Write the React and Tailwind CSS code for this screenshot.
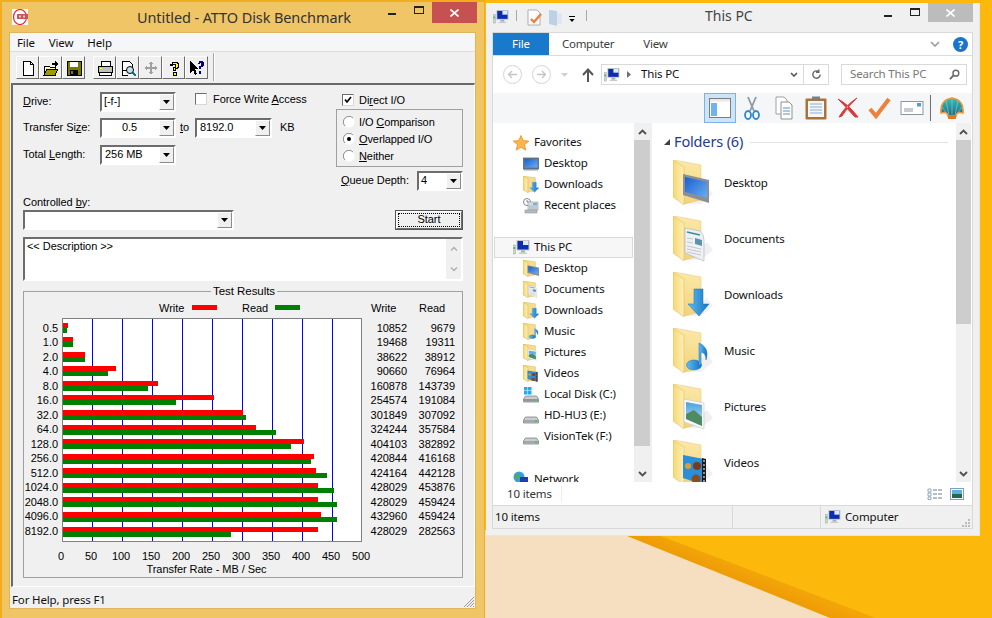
const sans = "font-['Liberation_Sans',Arial,sans-serif]";
const noto = "font-['Noto_Sans',sans-serif]";
const ui = "text-[11.5px] tracking-[-0.15px]";

const results = [
  ["0.5", 10852, 9679, 322, 68, 67],
  ["1.0", 19468, 19311, 336, 73, 73],
  ["2.0", 38622, 38912, 351, 85, 85],
  ["4.0", 90660, 76964, 365, 116, 108],
  ["8.0", 160878, 143739, 380, 158, 148],
  ["16.0", 254574, 191084, 394, 214, 176],
  ["32.0", 301849, 307092, 409, 243, 246],
  ["64.0", 324244, 357584, 424, 256, 276],
  ["128.0", 404103, 382892, 438, 304, 291],
  ["256.0", 420844, 416168, 453, 314, 311],
  ["512.0", 424164, 442128, 467, 316, 327],
  ["1024.0", 428029, 453876, 482, 318, 334],
  ["2048.0", 428029, 459424, 496, 318, 337],
  ["4096.0", 432960, 459424, 511, 321, 337],
  ["8192.0", 428029, 282563, 526, 318, 231],
];

const ticks = [0, 50, 100, 150, 200, 250, 300, 350, 400, 450, 500];

function Gradients() {
  return (
    <svg className="absolute w-0 h-0">
      <defs>
        <linearGradient id="flap" x1="0" y1="0" x2="1" y2="0">
          <stop offset="0" stopColor="#f7d774" />
          <stop offset="1" stopColor="#fdefb6" />
        </linearGradient>
        <linearGradient id="back" x1="0" y1="0" x2="0" y2="1">
          <stop offset="0" stopColor="#fbe9a8" />
          <stop offset="1" stopColor="#f3d27a" />
        </linearGradient>
        <linearGradient id="blue" x1="0" y1="0" x2="1" y2="1">
          <stop offset="0" stopColor="#1a5fd0" />
          <stop offset="1" stopColor="#6aaef2" />
        </linearGradient>
        <linearGradient id="arrow" x1="0" y1="0" x2="1" y2="0">
          <stop offset="0" stopColor="#62bdf0" />
          <stop offset="1" stopColor="#1273c4" />
        </linearGradient>
        <linearGradient id="sky" x1="0" y1="0" x2="0" y2="1">
          <stop offset="0" stopColor="#4aa0e0" />
          <stop offset="1" stopColor="#c6e6f4" />
        </linearGradient>
        <linearGradient id="shell" x1="0" y1="0" x2="0" y2="1">
          <stop offset="0" stopColor="#29c4c4" />
          <stop offset="1" stopColor="#0e6a96" />
        </linearGradient>
        <linearGradient id="band" gradientUnits="userSpaceOnUse" x1="735" y1="582" x2="752" y2="540">
          <stop offset="0" stopColor="#ee9a06" />
          <stop offset="1" stopColor="#fcb90c" />
        </linearGradient>
      </defs>
    </svg>
  );
}

function Overlay({ kind }) {
  if (kind === "Desktop")
    return (
      <g>
        <polygon points="10,14 36,20 36,43 10,35" fill="#8c8f94" />
        <polygon points="12,17 34,22 34,38 12,32" fill="url(#blue)" />
      </g>
    );
  if (kind === "Documents")
    return (
      <g>
        <path d="M12 12 L27 15 Q31 18 31 24 L31 45 L12 37 Z" fill="#eef0f4" stroke="#b4b8c0" strokeWidth="0.7" />
        <path d="M14 16 L27 19" stroke="#3a8f94" strokeWidth="1.5" />
        <polygon points="22,22 29,24 29,30 22,28" fill="#5c93a8" />
        <path d="M14 22 L20 23 M14 26 L20 27 M14 30 L28 33 M14 33 L28 36 M14 36 L28 39" stroke="#b8bcc4" strokeWidth="0.8" />
      </g>
    );
  if (kind === "Downloads")
    return <polygon points="21,17 30,17 30,32 36,32 26,44 15,32 21,32" fill="url(#arrow)" stroke="#1273c4" strokeWidth="0.5" />;
  if (kind === "Music")
    return (
      <g>
        <ellipse cx="21" cy="37" rx="7.5" ry="5" fill="url(#arrow)" stroke="#1273c4" strokeWidth="0.5" />
        <path d="M26 37 L26 15 Q37 20 33 32 Q33 25 28 24 L28 37 Z" fill="url(#arrow)" stroke="#1273c4" strokeWidth="0.5" />
      </g>
    );
  if (kind === "Pictures")
    return (
      <g>
        <polygon points="11,15 31,19 31,45 11,38" fill="#f6f8fa" stroke="#c4c8cc" strokeWidth="0.6" />
        <polygon points="13,18 29,21 29,42 13,35" fill="url(#sky)" />
        <polygon points="13,30 21,26 29,33 29,42 13,35" fill="#4f8a62" />
      </g>
    );
  if (kind === "Videos")
    return (
      <g>
        <polygon points="10,15 31,19 31,45 10,38" fill="#2b8fd8" />
        <polygon points="29,18 33,19 33,45 29,44" fill="#1c1c1c" />
        <path d="M30 21h2 M30 25h2 M30 29h2 M30 33h2 M30 37h2 M30 41h2" stroke="#fff" strokeWidth="1.2" />
        <circle cx="24" cy="26" r="4" fill="#7b3a1c" />
        <circle cx="23" cy="39" r="4.5" fill="#8f4a20" />
        <circle cx="15" cy="26" r="3" fill="#e0a030" />
      </g>
    );
  return null;
}

function Folder({ kind, small }) {
  if (small)
    return (
      <svg viewBox="0 0 36 46" preserveAspectRatio="none" className="w-[16px] h-[17px]">
        <polygon points="1,0 28,5 28,40 11,44" fill="#f6dc8c" stroke="#d9b55a" strokeWidth="1" />
        <polygon points="0,0 11,7 11,45 0,37" fill="url(#flap)" stroke="#c9a548" strokeWidth="1" />
        <Overlay kind={kind} />
      </svg>
    );
  return (
    <svg viewBox="0 0 40 46" className="w-[40px] h-[46px]">
      <polygon points="10,44 28,44 40,34 34,26" fill="#000" opacity="0.06" />
      <polygon points="1,0 28,5 28,40 11,44" fill="url(#back)" stroke="#e5c671" strokeWidth="0.5" />
      <polygon points="0,0 11,7 11,45 0,37" fill="url(#flap)" stroke="#d9b55a" strokeWidth="0.5" />
      <Overlay kind={kind} />
    </svg>
  );
}

function Pc({ className = "w-[17px] h-[15px]" }) {
  return (
    <svg viewBox="0 0 17 15" className={className}>
      <rect x="0" y="5" width="2.5" height="9" fill="#cfd5d6" stroke="#8a9490" strokeWidth="0.4" />
      <rect x="0.5" y="7" width="1.5" height="2" fill="#42b84a" />
      <rect x="3.5" y="0" width="13" height="10.5" fill="#c4c9cf" />
      <rect x="4.5" y="1" width="11" height="8.5" fill="#0b2db0" />
      <rect x="10" y="1" width="5.5" height="4" fill="#dfe9ff" />
      <rect x="8" y="10.5" width="4" height="2" fill="#a5abb0" />
      <rect x="6" y="12.5" width="8" height="1.5" fill="#c8ccd0" />
    </svg>
  );
}

function Drive({ win }) {
  return (
    <svg viewBox="0 0 16 16" className="w-[16px] h-[16px]">
      {win && (
        <g fill="#1ab0ef">
          <rect x="1" y="0" width="3.5" height="3.5" />
          <rect x="5" y="0" width="3.5" height="3.5" />
          <rect x="1" y="4" width="3.5" height="3.5" />
          <rect x="5" y="4" width="3.5" height="3.5" />
        </g>
      )}
      <path d="M2.5 9 L13.5 9 L15.5 12 L15.5 15 L0.5 15 L0.5 12 Z" fill="#c9cdd0" stroke="#6f767c" strokeWidth="0.7" />
      <rect x="1" y="12" width="14" height="2.5" fill={win ? "#8c979e" : "#a4a8ac"} />
      <rect x="12" y="12" width="2" height="2" fill="#5cc04c" />
    </svg>
  );
}

function NavIcon({ name }) {
  if (name === "Desktop*")
    return (
      <svg viewBox="0 0 16 16" className="w-[16px] h-[16px]">
        <rect x="0.5" y="2" width="15" height="11" fill="#6c7c8f" stroke="#43566f" strokeWidth="0.7" />
        <rect x="1.5" y="3" width="13" height="8.5" fill="url(#blue)" />
        <rect x="1" y="13" width="14" height="1.5" fill="#9aa3ad" />
      </svg>
    );
  if (name === "Recent places")
    return (
      <svg viewBox="0 0 16 16" className="w-[16px] h-[16px]">
        <circle cx="4" cy="4" r="3.5" fill="#fff" stroke="#7e8a92" />
        <path d="M4 2v2h2" stroke="#555" fill="none" strokeWidth="0.7" />
        <rect x="5" y="4" width="10" height="8" fill="#d8dee2" stroke="#8c979e" strokeWidth="0.6" />
        <rect x="10" y="5" width="4" height="2" fill="#6ab0e0" />
        <path d="M6 8h8 M6 10h8" stroke="#9aa4ac" strokeWidth="0.7" />
        <rect x="2" y="12" width="12" height="3" fill="#b6bcc2" stroke="#7e8a92" strokeWidth="0.5" />
      </svg>
    );
  if (name === "Local Disk (C:)") return <Drive win />;
  if (name === "HD-HU3 (E:)" || name === "VisionTek (F:)") return <Drive />;
  return <Folder kind={name} small />;
}

function NavRow({ name, icon }) {
  return (
    <div className="h-[21px] flex items-center pl-[30px] gap-[5px]">
      <NavIcon name={icon || name} />
      <span className="mt-[-1px] text-[#111]">{name}</span>
    </div>
  );
}

function TriDown({ className = "w-[7px] h-[4px]" }) {
  return (
    <svg viewBox="0 0 7 4" className={className}>
      <polygon points="0,0 7,0 3.5,4" fill="#000" />
    </svg>
  );
}

function Combo({ width, text, center, pad = "pl-[2px]" }) {
  return (
    <div className={"flex h-[20px] bg-white border-2 border-t-[#6d6d6d] border-l-[#6d6d6d] border-r-white border-b-white " + width}>
      <div className={"flex-1 flex items-center text-[11px] text-black " + pad + (center ? " justify-center" : "")}>{text}</div>
      <div className="w-[15px] flex items-center justify-center bg-[#f0f0f0] border border-t-white border-l-white border-r-[#8a8a8a] border-b-[#8a8a8a]">
        <TriDown />
      </div>
    </div>
  );
}

function Check({ checked }) {
  return (
    <div className="w-[12px] h-[12px] bg-white border border-t-[#6d6d6d] border-l-[#6d6d6d] border-r-[#d8d8d8] border-b-[#d8d8d8] flex items-center justify-center">
      {checked && (
        <svg viewBox="0 0 8 8" className="w-[8px] h-[8px]">
          <path d="M1 3.5 L3 6 L7 1" stroke="#000" strokeWidth="1.7" fill="none" />
        </svg>
      )}
    </div>
  );
}

function Radio({ on }) {
  return (
    <svg viewBox="0 0 12 12" className="w-[12px] h-[12px]">
      <circle cx="6" cy="6" r="5.5" fill="#fff" />
      <path d="M2 10 A5.5 5.5 0 0 1 10 2" stroke="#8e8e8e" fill="none" />
      {on && <circle cx="6" cy="6" r="2" fill="#000" />}
    </svg>
  );
}

function RadioRow({ on, children }) {
  return (
    <div className="h-[17px] flex items-center pl-[6px] gap-[4px] text-[11px] tracking-[-0.1px] text-black">
      <Radio on={on} />
      <span>{children}</span>
    </div>
  );
}

function ToolBtn({ children, className = "" }) {
  return (
    <div className={"w-[23px] h-[23px] flex items-center justify-center bg-[#f0f0f0] border border-t-white border-l-white border-r-[#6d6d6d] border-b-[#6d6d6d] " + className}>
      <svg viewBox="0 0 16 16" className="w-[16px] h-[16px]" shapeRendering="crispEdges">
        {children}
      </svg>
    </div>
  );
}

function AttoWindow() {
  return (
    <div className={"relative w-[485px] h-[618px] border-l-2 border-t-2 border-r border-[#f2ac1c] bg-[#efc566] " + sans}>
      <div className="h-[30px] flex items-start">
        <svg viewBox="0 0 16 16" className="w-[16px] h-[16px] ml-[10px] mt-[7px]">
          <rect width="16" height="16" fill="#fff" />
          <ellipse cx="8" cy="8" rx="6.5" ry="7.5" fill="none" stroke="#ee2030" strokeWidth="1.2" />
          <rect x="5" y="5" width="11" height="5" fill="#c8555a" />
          <rect x="7" y="6.5" width="2" height="2" fill="#d8c8c8" />
          <rect x="11" y="6.5" width="2" height="2" fill="#d8c8c8" />
        </svg>
        <div className={"ml-[109px] mt-[5px] text-[14.5px] leading-[20px] tracking-[-0.1px] text-[#333] " + noto}>Untitled - ATTO Disk Benchmark</div>
        <div className="ml-auto mr-[7px] flex">
          <div className="w-[27px] h-[20px] flex items-center justify-center">
            <div className="w-[8px] h-[2px] bg-[#222] mt-[3px]" />
          </div>
          <div className="w-[27px] h-[20px] flex items-center justify-center">
            <div className="w-[10px] h-[8px] border border-t-2 border-[#222] mt-[-4px]" />
          </div>
          <div className="w-[45px] h-[21px] bg-[#c75050] flex items-center justify-center">
            <svg viewBox="0 0 9 8" className="w-[9px] h-[8px]">
              <path d="M0.5 0.5 L8.5 7.5 M8.5 0.5 L0.5 7.5" stroke="#fff" strokeWidth="1.6" />
            </svg>
          </div>
        </div>
      </div>

      <div className="ml-[7px] w-[467px] h-[577px] border border-[#dcb55d] bg-[#f0f0f0] flex flex-col">
        <div className={"h-[19px] pt-[1px] bg-[#f5f6f7] border-b border-[#dedede] flex items-center text-[#111] " + ui + " " + noto}>
          <span className="ml-[7px]">File</span>
          <span className="ml-[14px]">View</span>
          <span className="ml-[14px]">Help</span>
        </div>

        <div className="h-[31px] flex pl-[6px] pt-[4px]">
          <ToolBtn>
            <path d="M3 1h7l3 3v11H3z" fill="#fff" stroke="#000" />
            <path d="M10 1v3h3" fill="none" stroke="#000" />
          </ToolBtn>
          <ToolBtn>
            <path d="M1 6h5l1 1h5v8H1z" fill="#ffff9c" stroke="#000" />
            <path d="M1 15l3-6h11l-3 6z" fill="#9c9c00" stroke="#000" />
            <path d="M9 3h3v-2l3 3-3 3v-2H9z" fill="#000" />
          </ToolBtn>
          <ToolBtn>
            <rect x="1" y="1" width="14" height="14" fill="#7a7a00" stroke="#000" />
            <rect x="4" y="2" width="8" height="5" fill="#fff" />
            <rect x="4" y="10" width="8" height="5" fill="#000" />
            <rect x="5" y="11" width="2" height="3" fill="#7a7a00" />
          </ToolBtn>
          <ToolBtn className="ml-[8px]">
            <rect x="4" y="1" width="9" height="5" fill="#fff" stroke="#000" />
            <rect x="1" y="6" width="14" height="6" fill="#c0c0c0" stroke="#000" />
            <rect x="3" y="8" width="2" height="1" fill="#ffff00" />
            <rect x="2" y="12" width="12" height="3" fill="#fff" stroke="#000" />
          </ToolBtn>
          <ToolBtn>
            <path d="M2 1h7l3 3v6H2z M2 10v5h6" fill="#fff" stroke="#000" />
            <circle cx="10" cy="10" r="3.5" fill="#bfe4f0" stroke="#000" shapeRendering="auto" />
            <path d="M13 13l3 3" stroke="#008080" strokeWidth="2" />
          </ToolBtn>
          <ToolBtn>
            <path d="M8 1l2 3H9v3h3V6l3 2-3 2V9H9v3h1l-2 3-2-3h1V9H4v1L1 8l3-2v1h3V4H6z" fill="#a0a0a0" />
          </ToolBtn>
          <ToolBtn>
            <path d="M4 4h2V2h5v1h1v4h-1v1H9v2H7V7h2V4H6v1H4z" fill="#ffff00" stroke="#000" />
            <rect x="7" y="12" width="3" height="3" fill="#ffff00" stroke="#000" />
          </ToolBtn>
          <ToolBtn>
            <path d="M1 1v12l3-3 2 5 2-1-2-5h4z" fill="#000" />
            <path d="M9 3h1V1h4v1h1v4h-1v1h-2v2h-2V6h2V3h-1v1H9z" fill="#000080" />
            <rect x="10" y="11" width="2" height="3" fill="#000080" />
          </ToolBtn>
          <div className="ml-[5px] mt-[-3px] w-[2px] h-[28px] border-l border-r border-l-[#a8a8a8] border-r-white" />
        </div>

        <div className="ml-px w-[464px] h-[507px] border-l-2 border-t-2 border-l-[#696969] border-t-[#696969] border-r border-b border-r-white border-b-white pl-[10px] pt-[7px] text-[11px] tracking-[-0.05px] text-black leading-[13px]">
          <div className="flex h-[99px]">
            <div className="w-[313px]">
              <div className="flex items-center">
                <span className="w-[77px]"><u>D</u>rive:</span>
                <Combo width="w-[76px]" text="[-f-]" />
                <div className="ml-[19px] self-start mt-[1px]"><Check /></div>
                <span className="ml-[6px] self-start mt-[1px]">Force Write <u>A</u>ccess</span>
              </div>
              <div className="flex items-center mt-[6px]">
                <span className="w-[77px]">Transfer Si<u>z</u>e:</span>
                <Combo width="w-[76px]" text="0.5" center pad="pr-[2px]" />
                <span className="w-[19px] pl-[4px]"><u>t</u>o</span>
                <Combo width="w-[77px]" text="8192.0" pad="pl-[3px]" />
                <span className="ml-[8px]">KB</span>
              </div>
              <div className="flex items-center mt-[7px]">
                <span className="w-[77px]">Total <u>L</u>ength:</span>
                <Combo width="w-[76px]" text="256 MB" pad="pl-[3px]" />
              </div>
            </div>
            <div className="w-[127px]">
              <div className="flex items-center pl-[6px] gap-[5px] mt-[2px]">
                <Check checked />
                <span>Di<u>r</u>ect I/O</span>
              </div>
              <div className="mt-[2px] h-[58px] border border-[#a0a0a0] pt-[4px]">
                <RadioRow><span>I/O <u>C</u>omparison</span></RadioRow>
                <RadioRow on><span><u>O</u>verlapped I/O</span></RadioRow>
                <RadioRow><span><u>N</u>either</span></RadioRow>
              </div>
              <div className="mt-[4px] flex items-center pl-[5px]">
                <span className="w-[76px]"><u>Q</u>ueue Depth:</span>
                <Combo width="w-[46px]" text="4" />
              </div>
            </div>
          </div>

          <div className="mt-[5px] h-[13px]">Controlled <u>b</u>y:</div>
          <div className="mt-[1px] flex w-[440px] justify-between">
            <Combo width="w-[211px]" text="" />
            <div className="w-[68px] h-[20px] border border-[#555] bg-[#f0f0f0]">
              <div className="h-full border border-t-white border-l-white border-r-[#6d6d6d] border-b-[#6d6d6d] p-[1px]">
                <div className="h-full border border-dotted border-black flex items-center justify-center">Start</div>
              </div>
            </div>
          </div>

          <div className="mt-[7px] w-[440px] h-[44px] flex bg-white border-2 border-t-[#6d6d6d] border-l-[#6d6d6d] border-r-white border-b-white">
            <div className="flex-1 pl-[2px] pt-[1px]">&lt;&lt; Description &gt;&gt;</div>
            <div className="w-[15px] flex flex-col justify-between items-center bg-[#f0f0f0] py-[7px]">
              <svg viewBox="0 0 8 5" className="w-[8px] h-[5px]"><path d="M1 4.5 L4 1.5 L7 4.5" stroke="#b0b0b0" strokeWidth="1.5" fill="none" /></svg>
              <svg viewBox="0 0 8 5" className="w-[8px] h-[5px]"><path d="M1 0.5 L4 3.5 L7 0.5" stroke="#b0b0b0" strokeWidth="1.5" fill="none" /></svg>
            </div>
          </div>

          <div className="relative mt-[10px] w-[440px] h-[287px] border border-[#a0a0a0]">
            <div className="absolute top-[-7px] left-[187px] bg-[#f0f0f0] px-[2px] text-[11.5px]">Test Results</div>

            <div className="flex h-[13px] mt-[10px] items-center pl-[135px]">
              <span className="w-[33px]">Write</span>
              <div className="w-[25px] h-[5px] bg-[#ff0000] mt-[-2px]" />
              <span className="ml-[25px] w-[33px]">Read</span>
              <div className="w-[25px] h-[5px] bg-[#008000] mt-[-2px]" />
              <span className="ml-[71px] w-[48px]">Write</span>
              <span>Read</span>
            </div>

            <div className="flex mt-[3px] h-[225px]">
              <div className="w-[34px] pt-[3px] text-right">
                {results.map((r) => (
                  <div key={r[0]} className="h-[14.5px] leading-[14.5px]">{r[0]}</div>
                ))}
              </div>
              <svg viewBox="62 317 301 225" className="ml-[4px] w-[301px] h-[225px]" shapeRendering="crispEdges">
                <rect x="62" y="317" width="300" height="224" fill="#fff" />
                {ticks.slice(1, 10).map((t) => (
                  <rect key={t} x={62 + t * 0.6} y="318" width="1" height="223" fill="#0000ff" />
                ))}
                {results.map((r) => (
                  <g key={r[0]}>
                    <rect x="63" y={r[3]} width={r[4] - 63} height="5" fill="#ff0000" />
                    <rect x="63" y={r[3] + 5} width={r[5] - 63} height="5" fill="#008000" />
                  </g>
                ))}
                <rect x="62.5" y="317.5" width="299" height="223" fill="none" stroke="#808080" />
              </svg>
              <div className="w-[44px] pt-[3px] text-right">
                {results.map((r) => (
                  <div key={r[0]} className="h-[14.5px] leading-[14.5px]">{r[1]}</div>
                ))}
              </div>
              <div className="w-[48px] pt-[3px] text-right">
                {results.map((r) => (
                  <div key={r[0]} className="h-[14.5px] leading-[14.5px]">{r[2]}</div>
                ))}
              </div>
            </div>

            <div className="flex mt-[7px] h-[13px] pl-[22px]">
              {ticks.map((t) => (
                <span key={t} className="w-[30px] text-center">{t}</span>
              ))}
            </div>
            <div className="w-[365px] text-center h-[13px]">Transfer Rate - MB / Sec</div>
          </div>
        </div>

        <div className={"relative flex-1 flex items-center pl-[2px] pt-[4px] text-[#111] " + ui + " " + noto}>
          For Help, press F1
          <svg viewBox="0 0 12 12" className="absolute right-0 bottom-0 w-[12px] h-[12px]">
            <path d="M11 1L1 11 M11 4L4 11 M11 7L7 11 M11 10L10 11" stroke="#9a9a9a" strokeWidth="1" />
          </svg>
        </div>
      </div>
    </div>
  );
}

function ScrollBar({ thumb, width = "w-[15px]" }) {
  return (
    <div className={"flex flex-col bg-[#f0f0f0] " + width}>
      <div className="h-[17px] flex items-center justify-center">
        <svg viewBox="0 0 9 6" className="w-[9px] h-[6px]"><path d="M1 5 L4.5 1.5 L8 5" stroke="#505050" strokeWidth="1.8" fill="none" /></svg>
      </div>
      <div className={"bg-[#cdcdcd] " + thumb} />
      <div className="flex-1" />
      <div className="h-[17px] flex items-center justify-center">
        <svg viewBox="0 0 9 6" className="w-[9px] h-[6px]"><path d="M1 1 L4.5 4.5 L8 1" stroke="#505050" strokeWidth="1.8" fill="none" /></svg>
      </div>
    </div>
  );
}

function CmdCell({ children, view = "0 0 24 24" }) {
  return (
    <div className="w-[32px] h-[30px] flex items-center justify-center">
      <svg viewBox={view} className="w-[24px] h-[24px]">{children}</svg>
    </div>
  );
}

function ExplorerWindow() {
  const folders = ["Desktop", "Documents", "Downloads", "Music", "Pictures", "Videos"];
  return (
    <div className={"relative ml-px mt-[3px] w-[494px] h-[533px] bg-[#f0f0f0] border-r border-b border-[#e6e6e6] " + ui + " " + noto}>
      <div className="h-[29px] flex items-start">
        <div className="ml-[7px] mt-[7px]"><Pc className="w-[16px] h-[14px]" /></div>
        <div className="ml-[7px] mt-[7px] w-px h-[11px] bg-[#a8a8a8]" />
        <svg viewBox="0 0 16 17" className="ml-[10px] mt-[6px] w-[16px] h-[17px]">
          <path d="M1 1h9l3 3v12H1z" fill="#fff" stroke="#9c9c9c" strokeWidth="0.8" />
          <path d="M4 10l3 3 7-8" stroke="#ee7f3c" strokeWidth="2.4" fill="none" />
        </svg>
        <svg viewBox="0 0 14 16" className="ml-[6px] mt-[7px] w-[14px] h-[16px]">
          <polygon points="0,0 8,1 8,16 0,14" fill="#bcd0e6" />
          <rect x="8" y="3" width="5" height="11" fill="#dfe8f2" />
        </svg>
        <div className="ml-[6px] mt-[13px] flex flex-col items-center gap-[2px]">
          <div className="w-[6px] h-px bg-black" />
          <TriDown className="w-[6px] h-[3px]" />
        </div>
        <div className="ml-[11px] mt-[7px] w-px h-[11px] bg-[#a8a8a8]" />
        <div className="ml-[118px] mt-[3px] text-[14px] tracking-normal leading-[20px] text-[#444]">This PC</div>
        <div className="ml-auto mr-[6px] flex">
          <div className="w-[27px] h-[20px] flex items-center justify-center">
            <div className="w-[8px] h-[2px] bg-[#222] mt-[5px]" />
          </div>
          <div className="w-[27px] h-[20px] flex items-center justify-center">
            <div className="w-[10px] h-[8px] border border-t-2 border-[#222] mt-[-2px]" />
          </div>
          <div className="w-[45px] h-[19px] bg-[#bcbcbc] flex items-center justify-center">
            <svg viewBox="0 0 9 8" className="w-[9px] h-[8px]">
              <path d="M0.5 0.5 L8.5 7.5 M8.5 0.5 L0.5 7.5" stroke="#fff" strokeWidth="1.6" />
            </svg>
          </div>
        </div>
      </div>

      <div className="ml-[6px] w-[481px] h-[497px] border border-[#d9d9d9] bg-white flex flex-col">
        <div className="h-[23px] flex items-stretch border-b border-[#dadbdc]">
          <div className="w-[56px] bg-[#1979ca] text-white flex items-center justify-center">File</div>
          <span className="ml-[13px] self-center tracking-[-0.3px] text-[#3c3c3c]">Computer</span>
          <span className="ml-[29px] self-center text-[#3c3c3c]">View</span>
          <svg viewBox="0 0 10 6" className="ml-auto self-center w-[10px] h-[6px]"><path d="M1 1 L5 5 L9 1" stroke="#9a9a9a" strokeWidth="1.6" fill="none" /></svg>
          <div className="ml-[13px] mr-[4px] self-center w-[15px] h-[15px] rounded-full bg-[#1a75c8] text-white text-[11px] font-bold leading-[15px] text-center">?</div>
        </div>

        <div className="h-[37px] flex items-center">
          <svg viewBox="0 0 19 19" className="ml-[10px] w-[19px] h-[19px]">
            <circle cx="9.5" cy="9.5" r="9" fill="#fff" stroke="#d4d4d4" />
            <path d="M14 9.5H5.5 M9 6 L5.5 9.5 L9 13" stroke="#c4c4c4" strokeWidth="1.3" fill="none" />
          </svg>
          <svg viewBox="0 0 19 19" className="ml-[10px] w-[19px] h-[19px]">
            <circle cx="9.5" cy="9.5" r="9" fill="#fff" stroke="#d4d4d4" />
            <path d="M5 9.5H13.5 M10 6 L13.5 9.5 L10 13" stroke="#c4c4c4" strokeWidth="1.3" fill="none" />
          </svg>
          <svg viewBox="0 0 9 4" className="ml-[9px] w-[9px] h-[4px]"><polygon points="1,0 8,0 4.5,4" fill="#d0d0d0" /></svg>
          <svg viewBox="0 0 12 14" className="ml-[13px] w-[12px] h-[14px]"><path d="M6 14V2 M1 7 L6 1.5 L11 7" stroke="#555" strokeWidth="2" fill="none" /></svg>
          <div className="ml-[7px] w-[228px] h-[21px] border border-[#d9d9d9] flex items-center">
            <div className="ml-[2px]"><Pc className="w-[16px] h-[14px]" /></div>
            <svg viewBox="0 0 4 7" className="ml-[7px] w-[4px] h-[7px]"><polygon points="0,0 4,3.5 0,7" fill="#707070" /></svg>
            <span className="ml-[10px] mt-[-1px] text-[#111] flex-1">This PC</span>
            <svg viewBox="0 0 8 5" className="w-[8px] h-[5px]"><path d="M1 1 L4 4 L7 1" stroke="#555" strokeWidth="1.6" fill="none" /></svg>
            <div className="ml-[5px] w-[25px] h-full border-l border-[#d9d9d9] flex items-center justify-center">
              <svg viewBox="0 0 12 12" className="w-[11px] h-[11px]"><path d="M10 6a4 4 0 1 1-1.4-3M8.5 0.5v3h-3" stroke="#666" strokeWidth="1.5" fill="none" /></svg>
            </div>
          </div>
          <div className="ml-[12px] w-[126px] h-[21px] border border-[#d9d9d9] flex items-center justify-between pl-[8px] pr-[6px] text-[#777]">
            <span className="mt-[-1px]">Search This PC</span>
            <svg viewBox="0 0 12 12" className="w-[11px] h-[11px]"><circle cx="7.5" cy="4.5" r="3.2" fill="none" stroke="#666" strokeWidth="1.5" /><path d="M5 7 L1 11" stroke="#666" strokeWidth="2" /></svg>
          </div>
        </div>

        <div className="h-[30px] flex items-center bg-[#f5f6f7] pl-[211px]">
          <div className="w-[32px] h-[30px] bg-[#cde4f8] border border-[#7ab3ea] flex items-center justify-center">
            <svg viewBox="0 0 22 20" className="w-[22px] h-[20px]">
              <rect x="0.5" y="0.5" width="21" height="19" fill="#fff" stroke="#7d7d7d" />
              <rect x="1" y="1" width="20" height="2.5" fill="#e8e8e8" />
              <rect x="2" y="5" width="6" height="13" fill="#6fb2f0" />
            </svg>
          </div>
          <CmdCell>
            <path d="M8 1 L14 15 M16 1 L10 15" stroke="#8d9aa5" strokeWidth="1.8" />
            <ellipse cx="8" cy="19" rx="3" ry="4" fill="none" stroke="#2a88d8" strokeWidth="1.8" />
            <ellipse cx="16" cy="19" rx="3" ry="4" fill="none" stroke="#2a88d8" strokeWidth="1.8" />
          </CmdCell>
          <CmdCell>
            <path d="M4 1h8l3 3v14H4z" fill="#fff" stroke="#a0a0a0" />
            <path d="M9 6h8l3 3v14H9z" fill="#fff" stroke="#909090" />
            <path d="M11 12h7 M11 15h7 M11 18h7" stroke="#5c8fc0" />
          </CmdCell>
          <CmdCell>
            <rect x="1.5" y="2.5" width="21" height="21" fill="#a8733f" rx="1" />
            <rect x="4" y="5" width="16" height="16" fill="#f4f6f8" />
            <path d="M6 8h12 M6 11h12 M6 14h12 M6 17h12" stroke="#8ab0d0" />
            <rect x="8" y="0.5" width="8" height="4" fill="#7f7f7f" />
          </CmdCell>
          <CmdCell>
            <path d="M2 3 Q12 8 22 21 L19 21 Q10 11 2 3 Z M21 2 Q10 9 3 21 L6 20 Q12 10 21 2 Z" fill="#d83a3a" stroke="#d83a3a" strokeWidth="1" />
          </CmdCell>
          <CmdCell>
            <path d="M2 13 L8 20 L21 3" stroke="#ee7f3c" strokeWidth="4" fill="none" />
          </CmdCell>
          <CmdCell>
            <rect x="1" y="5.5" width="22" height="13" fill="#fff" stroke="#8a98a4" />
            <rect x="17" y="7" width="4" height="3.5" fill="#4aa0d0" />
            <path d="M4 13h9 M4 15h9" stroke="#8a98a4" />
          </CmdCell>
          <div className="ml-[2px] w-px h-[26px] bg-[#707070]" />
          <div className="ml-[5px]">
            <CmdCell>
              <path d="M1 17 Q0 4 12 2 Q24 4 23 17 Q17 15 16 20 L8 20 Q7 15 1 17Z" fill="url(#shell)" stroke="#e8943a" strokeWidth="1.5" />
              <path d="M12 3V19 M6 5L9 19 M18 5L15 19 M2 11L8 19 M22 11L16 19" stroke="#e8c060" strokeWidth="0.6" />
              <rect x="8" y="20" width="8" height="3" fill="#e07a20" />
            </CmdCell>
          </div>
        </div>

        <div className="h-[359px] flex">
          <div className="w-[141px] h-full overflow-hidden pt-[9px]">
            <div className="h-[21px] flex items-center pl-[20px] gap-[5px]">
              <svg viewBox="0 0 16 16" className="w-[16px] h-[16px]"><polygon points="8,0.5 10.2,5.6 15.7,6.1 11.5,9.7 12.8,15.2 8,12.3 3.2,15.2 4.5,9.7 0.3,6.1 5.8,5.6" fill="#fbb848" stroke="#ec8a2c" strokeWidth="0.8" /></svg>
              <span className="mt-[-1px] text-[#111]">Favorites</span>
            </div>
            <NavRow name="Desktop" icon="Desktop*" />
            <NavRow name="Downloads" />
            <NavRow name="Recent places" />
            <div className="h-[21px]" />
            <div className="ml-px w-[139px] h-[21px] flex items-center pl-[18px] gap-[4px] border border-[#d9d9d9] bg-[#f7f7f7]">
              <Pc className="w-[17px] h-[15px]" />
              <span className="mt-[-1px] text-[#111]">This PC</span>
            </div>
            <NavRow name="Desktop" />
            <NavRow name="Documents" />
            <NavRow name="Downloads" />
            <NavRow name="Music" />
            <NavRow name="Pictures" />
            <NavRow name="Videos" />
            <NavRow name="Local Disk (C:)" />
            <NavRow name="HD-HU3 (E:)" />
            <NavRow name="VisionTek (F:)" />
            <div className="h-[21px]" />
            <div className="h-[21px] flex items-center pl-[20px] gap-[5px]">
              <svg viewBox="0 0 16 16" className="w-[16px] h-[16px]">
                <circle cx="6" cy="6" r="5.5" fill="#3aa0d8" />
                <path d="M2 4 Q5 2 7 5 Q6 8 3 8Z" fill="#4fae4a" />
                <rect x="7" y="6" width="8" height="8" fill="#1f3fb0" />
              </svg>
              <span className="text-[#111]">Network</span>
            </div>
          </div>
          <ScrollBar thumb="h-[306px]" width="w-[16px]" />
          <div className="w-[2px] bg-[#f0f0f0]" />
          <div className="w-[304px] h-full overflow-hidden pt-[8px]">
            <div className="h-[22px] flex items-center pl-[12px]">
              <svg viewBox="0 0 6 6" className="w-[6px] h-[6px]"><polygon points="6,0 6,6 0,6" fill="#404040" /></svg>
              <span className="ml-[4px] text-[14.5px] text-[#1e3a8f]">Folders (6)</span>
              <div className="ml-[7px] mr-[8px] flex-1 h-px bg-[#e2e2e2]" />
            </div>
            <div className="mt-[2px]">
              {folders.map((f) => (
                <div key={f} className="h-[56px] flex items-center pl-[21px]">
                  <div className="w-[51px]"><Folder kind={f} /></div>
                  <span className="mt-[-1px] text-[#111]">{f}</span>
                </div>
              ))}
            </div>
          </div>
          <ScrollBar thumb="h-[184px]" />
        </div>

        <div className="h-[24px] flex items-center border-b border-[#d9d9d9] text-[#333]">
          <span className="ml-[14px] w-[54px]">10 items</span>
          <div className="w-px h-[16px] bg-[#eeeeee]" />
          <svg viewBox="0 0 16 12" className="ml-auto w-[16px] h-[12px]">
            <path d="M1 1h3v3H1z M1 5h3v3H1z M1 9h3v2.5H1z" fill="none" stroke="#6a8cb0" strokeWidth="0.7" />
            <path d="M6 2h4 M11 2h4 M6 6h4 M11 6h4 M6 10h4 M11 10h4" stroke="#6a7c90" />
          </svg>
          <svg viewBox="0 0 14 12" className="ml-[7px] mr-[8px] w-[14px] h-[12px]">
            <rect x="0.5" y="0.5" width="13" height="11" fill="#fff" stroke="#7aa0c4" />
            <rect x="2" y="2" width="10" height="4" fill="#5fb0e0" />
            <rect x="2" y="6" width="10" height="4" fill="#1f6a50" />
          </svg>
        </div>

        <div className="relative flex-1 bg-[#f0f0f0] flex items-center text-[#111]">
          <span className="ml-[2px] w-[237px]">10 items</span>
          <div className="w-[88px] h-full border-l border-[#d9d9d9]" />
          <div className="h-full border-l border-[#d9d9d9] pl-[4px] flex items-center gap-[4px]">
            <Pc className="w-[16px] h-[14px]" />
            <span>Computer</span>
          </div>
          <svg viewBox="0 0 8 8" className="absolute right-[2px] bottom-[1px] w-[8px] h-[8px]">
            <path d="M6 0h2v2H6z M3 3h2v2H3z M6 3h2v2H6z M0 6h2v2H0z M3 6h2v2H3z M6 6h2v2H6z" fill="#bcbcbc" />
          </svg>
        </div>
      </div>
    </div>
  );
}

export default function App() {
  return (
    <div className="relative w-[992px] h-[618px] overflow-hidden bg-[#fcb90c] flex items-start">
      <Gradients />
      <svg viewBox="0 0 992 618" className="absolute inset-0 w-[992px] h-[618px]">
        <polygon points="612,530 645,530 876,618 830,618" fill="url(#band)" />
        <polygon points="480,530 612,530 830,618 480,618" fill="#f5dfc0" />
      </svg>
      <AttoWindow />
      <ExplorerWindow />
    </div>
  );
}
